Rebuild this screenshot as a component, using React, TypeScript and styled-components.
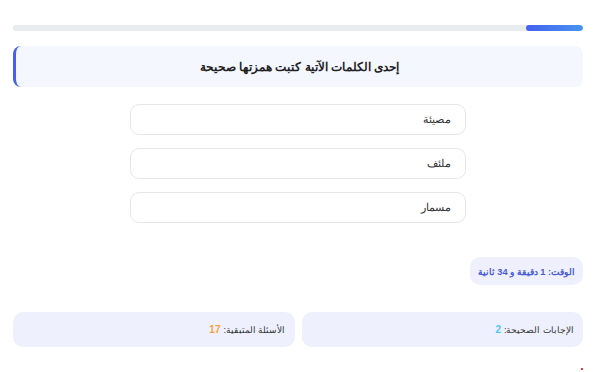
import styled, { createGlobalStyle } from "styled-components";

const GlobalStyle = createGlobalStyle`
  body {
    margin: 0;
    background: #ffffff;
    font-family: "Liberation Sans", Arial, sans-serif;
  }
`;

const options = ["مصيئة", "ملئف", "مسمار"];

export default function App() {
  return (
    <>
      <GlobalStyle />
      <Page dir="rtl">
        <Progress>
          <ProgressFill style={{ width: `${(1 / 10) * 100}%` }} />
        </Progress>

        <Question>إحدى الكلمات الآتية كتبت همزتها صحيحة</Question>

        <OptionList>
          {options.map((o) => (
            <Option key={o}>{o}</Option>
          ))}
        </OptionList>

        <TimerRow>
          <Timer>الوقت: 1 دقيقة و 34 ثانية</Timer>
        </TimerRow>

        <Stats>
          <Stat>
            الإجابات الصحيحة: <Num $color="#4fc3f7">2</Num>
          </Stat>
          <Stat>
            الأسئلة المتبقية: <Num $color="#f4a23a">17</Num>
          </Stat>
        </Stats>

        <Dot />
      </Page>
    </>
  );
}

const Page = styled.div`
  padding: 25px 15px 0 13px;
  display: flex;
  flex-direction: column;
`;

const Progress = styled.div`
  height: 6px;
  background: #e9ecef;
  border-radius: 3px;
  overflow: hidden;
  display: flex;
`;

const ProgressFill = styled.div`
  height: 100%;
  background: linear-gradient(to left, #4895ef, #4361ee);
  border-radius: 3px;
`;

const Question = styled.div`
  margin-top: 15px;
  height: 41px;
  box-sizing: border-box;
  background: #f4f7fe;
  border-left: 3px solid #4361ee;
  border-radius: 8px;
  display: flex;
  align-items: center;
  justify-content: center;
  font-size: 11.6px;
  font-weight: bold;
  color: #222;
`;

const OptionList = styled.div`
  margin: 17px auto 0;
  width: 336px;
  display: flex;
  flex-direction: column;
  gap: 13px;
`;

const Option = styled.div`
  height: 31px;
  box-sizing: border-box;
  border: 1px solid #e5e7eb;
  border-radius: 9px;
  background: #fff;
  display: flex;
  align-items: center;
  padding: 0 14px;
  font-size: 11px;
  color: #333;
`;

const TimerRow = styled.div`
  margin-top: 34px;
  display: flex;
`;

const Timer = styled.div`
  height: 28px;
  box-sizing: border-box;
  padding: 0 8px;
  display: flex;
  align-items: center;
  background: #eef0fd;
  border-radius: 10px;
  color: #4a5bd6;
  font-size: 9.2px;
  font-weight: bold;
`;

const Stats = styled.div`
  margin-top: 27px;
  display: grid;
  grid-template-columns: 1fr 1fr;
  gap: 7px;
`;

const Stat = styled.div`
  height: 35px;
  box-sizing: border-box;
  padding: 0 9px;
  display: flex;
  align-items: center;
  gap: 3px;
  background: #eef1fd;
  border-radius: 10px;
  font-size: 9px;
  color: #333;
`;

const Num = styled.span<{ $color: string }>`
  color: ${({ $color }) => $color};
  font-weight: bold;
  font-size: 10px;
`;

const Dot = styled.span`
  align-self: flex-start;
  margin-top: 21px;
  width: 2px;
  height: 2px;
  background: #e53935;
`;
